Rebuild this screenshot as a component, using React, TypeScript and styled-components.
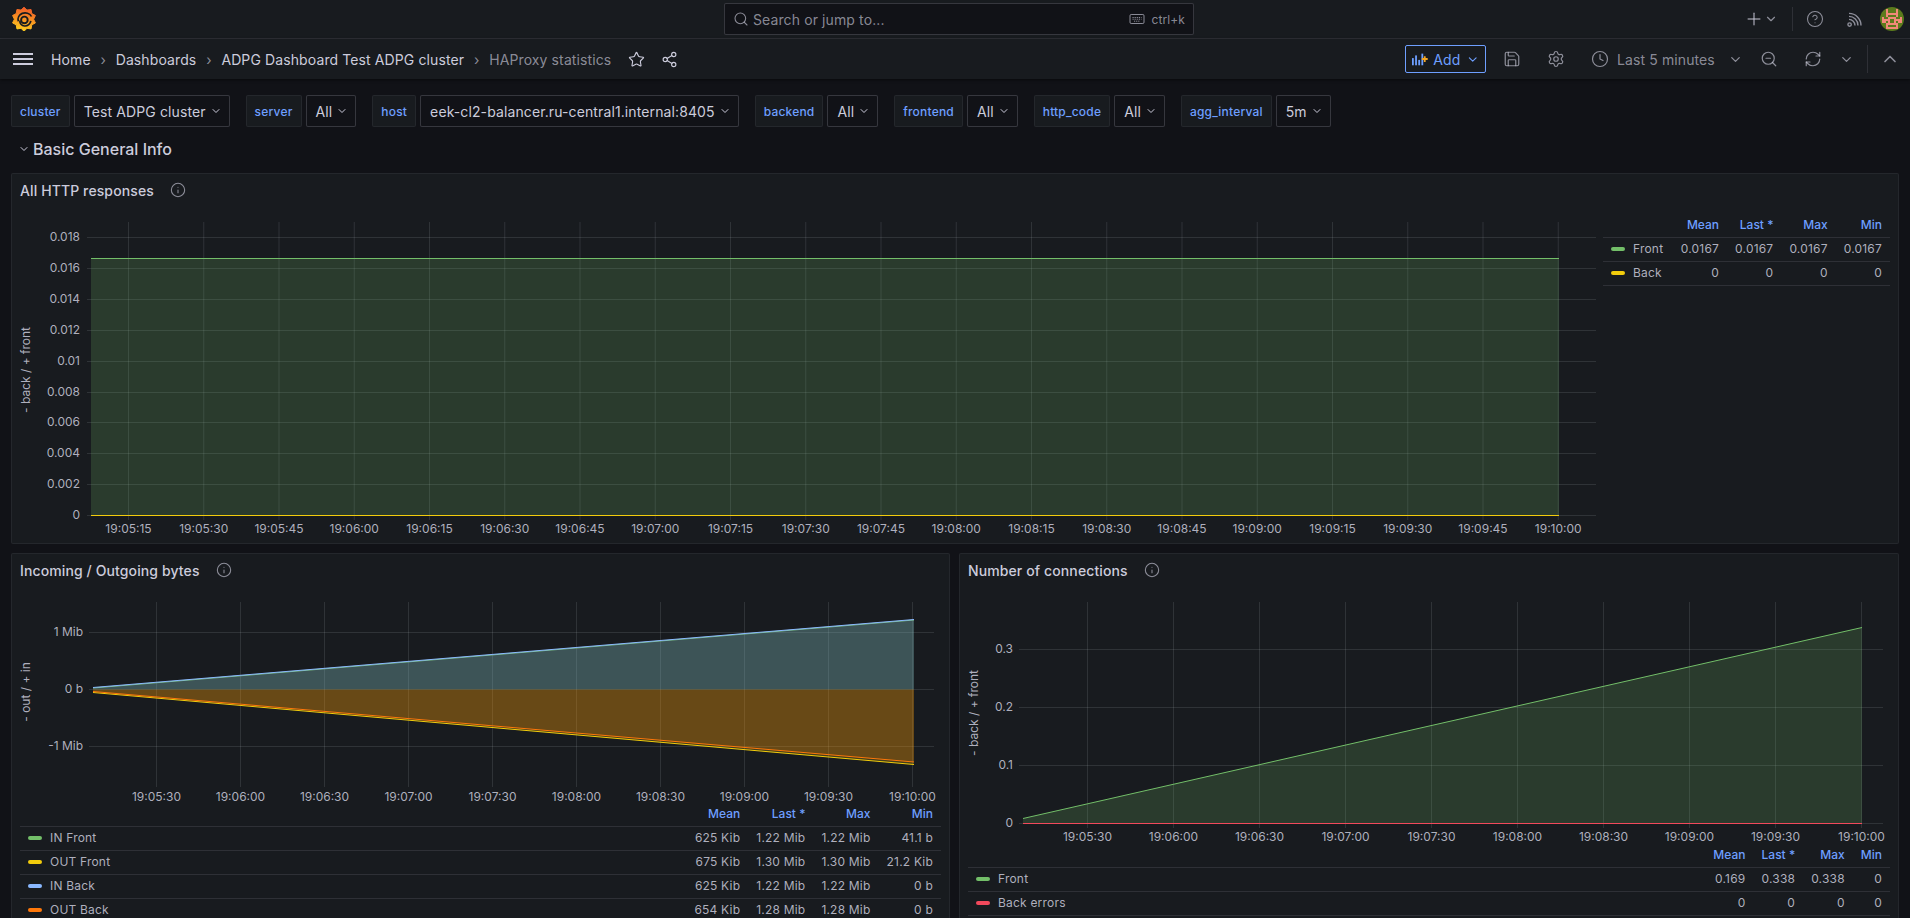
import React from "react";
import styled, { createGlobalStyle } from "styled-components";
import {
  ChevronDown,
  ChevronUp,
  Clock,
  Info,
  Plus,
  RefreshCw,
  Save,
  Search,
  Settings,
  Share2,
  Star,
  ZoomOut,
  CircleHelp,
} from "lucide-react";

type Series = { color: string; from: number; to: number; fill?: boolean };

type ChartProps = {
  left: number;
  top: number;
  width: number;
  height: number;
  gridLeft: number;
  gridRight: number;
  gridTop: number;
  gridBottom: number;
  plotLeft: number;
  plotRight: number;
  baseline: number;
  labelRight: number;
  axisTitle: string;
  axisX: number;
  axisY: number;
  xLabelY: number;
  yTicks: [number, string][];
  xTicks: [number, string][];
  series: Series[];
};

type LegendRow = { color: string; name: string; values: string[] };

const GREEN = "#73BF69";
const YELLOW = "#F2CC0C";
const BLUE = "#8AB8FF";
const ORANGE = "#FF780A";
const RED = "#F2495C";

const timeLabels = (start: number, step: number, first: number, gap: number, count: number) =>
  Array.from({ length: count }, (_, i): [number, string] => {
    const total = 19 * 3600 + 5 * 60 + first + gap * i;
    const mm = String(Math.floor(total / 60) % 60).padStart(2, "0");
    const ss = String(total % 60).padStart(2, "0");
    return [start + step * i, `19:${mm}:${ss}`];
  });

const httpChart: ChartProps = {
  left: 12,
  top: 207,
  width: 1590,
  height: 336,
  gridLeft: 87,
  gridRight: 1596,
  gridTop: 222,
  gridBottom: 520,
  plotLeft: 91,
  plotRight: 1559,
  baseline: 515.5,
  labelRight: 80,
  axisTitle: "- back / + front",
  axisX: 26,
  axisY: 370,
  xLabelY: 529,
  yTicks: [
    [237.5, "0.018"],
    [268.5, "0.016"],
    [299.5, "0.014"],
    [330.5, "0.012"],
    [361.5, "0.01"],
    [392.5, "0.008"],
    [422.5, "0.006"],
    [453.5, "0.004"],
    [484.5, "0.002"],
    [515.5, "0"],
  ],
  xTicks: timeLabels(128.5, 75.25, 15, 15, 20),
  series: [
    { color: GREEN, from: 258.5, to: 258.5, fill: true },
    { color: YELLOW, from: 515.5, to: 515.5 },
  ],
};

const bytesChart: ChartProps = {
  left: 12,
  top: 587,
  width: 937,
  height: 215,
  gridLeft: 89,
  gridRight: 934,
  gridTop: 602,
  gridBottom: 787,
  plotLeft: 93,
  plotRight: 914,
  baseline: 689.5,
  labelRight: 83,
  axisTitle: "- out / + in",
  axisX: 26,
  axisY: 692,
  xLabelY: 796.5,
  yTicks: [
    [632.5, "1 Mib"],
    [689.5, "0 b"],
    [746.5, "-1 Mib"],
  ],
  xTicks: timeLabels(156.5, 84, 30, 30, 10),
  series: [
    { color: GREEN, from: 688, to: 620, fill: true },
    { color: BLUE, from: 687.5, to: 619.5, fill: true },
    { color: YELLOW, from: 692.5, to: 764.5, fill: true },
    { color: ORANGE, from: 691.5, to: 762, fill: true },
  ],
};

const connectionsChart: ChartProps = {
  left: 960,
  top: 587,
  width: 938,
  height: 256,
  gridLeft: 1019,
  gridRight: 1883,
  gridTop: 602,
  gridBottom: 828,
  plotLeft: 1023,
  plotRight: 1862,
  baseline: 823.5,
  labelRight: 1013,
  axisTitle: "- back / + front",
  axisX: 974,
  axisY: 713,
  xLabelY: 837,
  yTicks: [
    [649.5, "0.3"],
    [707.5, "0.2"],
    [765.5, "0.1"],
    [823.5, "0"],
  ],
  xTicks: timeLabels(1087.5, 86, 30, 30, 10),
  series: [
    { color: GREEN, from: 818.5, to: 627.5, fill: true },
    { color: RED, from: 823.5, to: 823.5 },
  ],
};

const httpLegend: LegendRow[] = [
  { color: GREEN, name: "Front", values: ["0.0167", "0.0167", "0.0167", "0.0167"] },
  { color: YELLOW, name: "Back", values: ["0", "0", "0", "0"] },
];

const bytesLegend: LegendRow[] = [
  { color: GREEN, name: "IN Front", values: ["625 Kib", "1.22 Mib", "1.22 Mib", "41.1 b"] },
  { color: YELLOW, name: "OUT Front", values: ["675 Kib", "1.30 Mib", "1.30 Mib", "21.2 Kib"] },
  { color: BLUE, name: "IN Back", values: ["625 Kib", "1.22 Mib", "1.22 Mib", "0 b"] },
  { color: ORANGE, name: "OUT Back", values: ["654 Kib", "1.28 Mib", "1.28 Mib", "0 b"] },
];

const connectionsLegend: LegendRow[] = [
  { color: GREEN, name: "Front", values: ["0.169", "0.338", "0.338", "0"] },
  { color: RED, name: "Back errors", values: ["0", "0", "0", "0"] },
];

const variables = [
  { label: "cluster", value: "Test ADPG cluster" },
  { label: "server", value: "All" },
  { label: "host", value: "eek-cl2-balancer.ru-central1.internal:8405" },
  { label: "backend", value: "All" },
  { label: "frontend", value: "All" },
  { label: "http_code", value: "All" },
  { label: "agg_interval", value: "5m" },
];

const avatarPixels = [
  "............",
  "...#....#...",
  "...#....#...",
  "...######...",
  "...#....#...",
  ".#..####..#.",
  ".####..####.",
  ".##.#..#.##.",
  "...######...",
  "...#....#...",
  "...######...",
  "............",
];

const logoPoints = Array.from({ length: 20 }, (_, i) => {
  const angle = (Math.PI * 2 * i) / 20 - Math.PI / 2;
  const radius = i % 2 === 0 ? 12 : 9.6;
  return `${(12 + radius * Math.cos(angle)).toFixed(2)},${(12.2 + radius * Math.sin(angle)).toFixed(2)}`;
}).join(" ");

const GrafanaLogo = () => (
  <svg width="24" height="24" viewBox="0 0 24 24">
    <defs>
      <linearGradient id="logoFill" x1="0.35" y1="1" x2="0.55" y2="0">
        <stop offset="0" stopColor="#FFD21F" />
        <stop offset="0.5" stopColor="#F89321" />
        <stop offset="1" stopColor="#F05A28" />
      </linearGradient>
    </defs>
    <polygon points={logoPoints} fill="url(#logoFill)" stroke="url(#logoFill)" strokeWidth="1" strokeLinejoin="round" />
    <path
      d="M19.5 9.5C18 6.3 13.6 5 10.2 6.4C7 7.7 5.4 11 6.3 14.3M18.8 13.8C18.5 17 15.6 19.2 12.6 19C9.6 18.8 7.6 16.4 7.9 13.6"
      fill="none"
      stroke="#181B1F"
      strokeWidth="1.7"
    />
    <circle cx="12.4" cy="12.9" r="3.3" fill="none" stroke="#181B1F" strokeWidth="1.9" />
  </svg>
);

const RssIcon = () => (
  <svg width="18" height="18" viewBox="0 0 18 18" fill="none" stroke="currentColor" strokeWidth="1.4">
    <circle cx="3.6" cy="14.6" r="1.7" />
    <path d="M3 9.4a6 6 0 0 1 6 6" />
    <path d="M3 6.4a9 9 0 0 1 9 9" />
    <path d="M3 3.4a12 12 0 0 1 12 12" />
  </svg>
);

const KeyboardIcon = () => (
  <svg width="16" height="12" viewBox="0 0 16 12" fill="none" stroke="currentColor">
    <rect x="1" y="1.5" width="14" height="9" rx="1.2" />
    <path d="M3.5 4.5h9M3.5 6.2h9M5 8.2h6" strokeDasharray="1.2 0.9" />
  </svg>
);

const AddPanelIcon = () => (
  <svg width="18" height="16" viewBox="0 0 18 16">
    <g fill="#6E9FFF">
      <rect x="0" y="7" width="2" height="8" />
      <rect x="3.5" y="4" width="2" height="11" />
      <rect x="7" y="9" width="2" height="6" />
      <rect x="10.5" y="2" width="2" height="13" />
    </g>
    <path d="M11 8h6.5M14.2 4.8v6.5" stroke="#F5A623" strokeWidth="2" />
  </svg>
);

const Avatar = () => (
  <svg width="24" height="24" viewBox="0 0 24 24">
    <defs>
      <clipPath id="avatarClip">
        <circle cx="12" cy="12" r="12" />
      </clipPath>
    </defs>
    <g clipPath="url(#avatarClip)">
      <rect width="24" height="24" fill="#5B7B1C" />
      {avatarPixels.map((row, y) =>
        row.split("").map((cell, x) =>
          cell === "#" ? <rect key={`${x}-${y}`} x={x * 2} y={y * 2} width="2" height="2" fill="#F0897A" /> : null
        )
      )}
    </g>
  </svg>
);

const Chart = (c: ChartProps) => (
  <ChartSvg width={c.width} height={c.height} viewBox={`${c.left} ${c.top} ${c.width} ${c.height}`}>
    {c.yTicks.map(([y, label]) => (
      <g key={label}>
        <GridLine x1={c.gridLeft} x2={c.gridRight} y1={y} y2={y} />
        <AxisText x={c.labelRight} y={y} dy="0.27em" textAnchor="end">
          {label}
        </AxisText>
      </g>
    ))}
    {c.xTicks.map(([x, label]) => (
      <g key={label}>
        <GridLine x1={x} x2={x} y1={c.gridTop} y2={c.gridBottom} />
        <AxisText x={x} y={c.xLabelY} dy="0.35em" textAnchor="middle">
          {label}
        </AxisText>
      </g>
    ))}
    <AxisText
      x={c.axisX}
      y={c.axisY}
      dy="0.35em"
      textAnchor="middle"
      transform={`rotate(-90 ${c.axisX} ${c.axisY})`}
    >
      {c.axisTitle}
    </AxisText>
    {c.series.map((s) => (
      <g key={s.color}>
        {s.fill && (
          <polygon
            points={`${c.plotLeft},${c.baseline} ${c.plotLeft},${s.from} ${c.plotRight},${s.to} ${c.plotRight},${c.baseline}`}
            fill={s.color}
            fillOpacity="0.2"
          />
        )}
        <line x1={c.plotLeft} y1={s.from} x2={c.plotRight} y2={s.to} stroke={s.color} strokeWidth="1" />
      </g>
    ))}
  </ChartSvg>
);

const Legend = ({ rows }: { rows: LegendRow[] }) => (
  <LegendTable>
    <thead>
      <tr>
        <LegendHead $wide />
        <LegendHead>Mean</LegendHead>
        <LegendHead>Last *</LegendHead>
        <LegendHead>Max</LegendHead>
        <LegendHead>Min</LegendHead>
      </tr>
    </thead>
    <tbody>
      {rows.map((row) => (
        <tr key={row.name}>
          <LegendName>
            <LegendLabel>
              <LegendSwatch $color={row.color} />
              {row.name}
            </LegendLabel>
          </LegendName>
          {row.values.map((value, i) => (
            <LegendValue key={i}>{value}</LegendValue>
          ))}
        </tr>
      ))}
    </tbody>
  </LegendTable>
);

const PanelTitle = ({ title }: { title: string }) => (
  <PanelHeader>
    <PanelName>{title}</PanelName>
    <InfoMark>
      <Info size={16} strokeWidth={1.6} />
    </InfoMark>
  </PanelHeader>
);

const App: React.FC = () => {
  return (
    <Page>
      <GlobalStyle />
      <TopNav>
        <NavLeft>
          <GrafanaLogo />
        </NavLeft>
        <SearchBox>
          <Search size={16} strokeWidth={1.6} />
          <SearchText>Search or jump to...</SearchText>
          <Shortcut>
            <KeyboardIcon />
            ctrl+k
          </Shortcut>
        </SearchBox>
        <NavRight>
          <Plus size={20} strokeWidth={1.8} />
          <SmallChevron $left={0}>
            <ChevronDown size={14} />
          </SmallChevron>
          <NavDivider />
          <NavIcon>
            <CircleHelp size={18} strokeWidth={1.4} />
          </NavIcon>
          <NavIcon>
            <RssIcon />
          </NavIcon>
          <AvatarSlot>
            <Avatar />
          </AvatarSlot>
        </NavRight>
      </TopNav>

      <Toolbar>
        <Crumbs>
          <MenuButton>
            <span />
            <span />
            <span />
          </MenuButton>
          <Crumb>Home</Crumb>
          <CrumbArrow>›</CrumbArrow>
          <Crumb>Dashboards</Crumb>
          <CrumbArrow>›</CrumbArrow>
          <Crumb>ADPG Dashboard Test ADPG cluster</Crumb>
          <CrumbArrow>›</CrumbArrow>
          <Crumb $current>HAProxy statistics</Crumb>
          <CrumbIcon $left={17}>
            <Star size={17} strokeWidth={1.6} />
          </CrumbIcon>
          <CrumbIcon $left={16}>
            <Share2 size={17} strokeWidth={1.6} />
          </CrumbIcon>
        </Crumbs>
        <Tools>
          <AddButton>
            <AddPanelIcon />
            Add
            <ChevronDown size={15} />
          </AddButton>
          <ToolButton $left={10}>
            <Save size={18} strokeWidth={1.6} />
          </ToolButton>
          <ToolButton $left={12}>
            <Settings size={18} strokeWidth={1.6} />
          </ToolButton>
          <TimePicker>
            <Clock size={18} strokeWidth={1.6} />
            <TimeLabel>Last 5 minutes</TimeLabel>
            <ChevronDown size={15} />
          </TimePicker>
          <ToolButton $left={2}>
            <ZoomOut size={18} strokeWidth={1.6} />
          </ToolButton>
          <ToolButton $left={12}>
            <RefreshCw size={18} strokeWidth={1.6} />
          </ToolButton>
          <SmallChevron $left={10}>
            <ChevronDown size={15} />
          </SmallChevron>
          <ToolDivider />
          <ToolButton $left={6}>
            <ChevronUp size={20} />
          </ToolButton>
        </Tools>
      </Toolbar>

      <Content>
        <Variables>
          {variables.map((v) => (
            <VariableGroup key={v.label}>
              <VariableLabel>{v.label}</VariableLabel>
              <VariableValue>
                {v.value}
                <ChevronDown size={12} strokeWidth={2} />
              </VariableValue>
            </VariableGroup>
          ))}
        </Variables>

        <RowHeader>
          <ChevronDown size={12} strokeWidth={2} />
          Basic General Info
        </RowHeader>

        <PanelGrid>
          <WidePanel>
            <PanelTitle title="All HTTP responses" />
            <WideBody>
              <Chart {...httpChart} />
              <SideLegend>
                <Legend rows={httpLegend} />
              </SideLegend>
            </WideBody>
          </WidePanel>
          <Panel>
            <PanelTitle title="Incoming / Outgoing bytes" />
            <Chart {...bytesChart} />
            <BottomLegend>
              <Legend rows={bytesLegend} />
            </BottomLegend>
          </Panel>
          <Panel>
            <PanelTitle title="Number of connections" />
            <Chart {...connectionsChart} />
            <BottomLegend>
              <Legend rows={connectionsLegend} />
            </BottomLegend>
          </Panel>
        </PanelGrid>
      </Content>
    </Page>
  );
};

export default App;

const GlobalStyle = createGlobalStyle`
  html, body {
    margin: 0;
    height: 100%;
    background: #111217;
    overflow: hidden;
  }
  body {
    font-family: Inter, "Noto Sans", sans-serif;
    font-size: 14px;
    letter-spacing: 0.11px;
    color: #ccccdc;
  }
`;

const Page = styled.div`
  height: 918px;
  overflow: hidden;
  background: #111217;
`;

const TopNav = styled.header`
  display: grid;
  grid-template-columns: 724px 470px 1fr;
  align-items: center;
  height: 38px;
  background: #181b1f;
  border-bottom: 1px solid rgba(204, 204, 220, 0.12);
`;

const NavLeft = styled.div`
  display: flex;
  padding-left: 12px;
`;

const SearchBox = styled.div`
  display: flex;
  align-items: center;
  box-sizing: border-box;
  height: 32px;
  padding: 0 8px;
  gap: 4px;
  background: #111217;
  border: 1px solid rgba(204, 204, 220, 0.2);
  border-radius: 2px;
  color: rgba(204, 204, 220, 0.65);
`;

const SearchText = styled.span`
  flex: 1;
`;

const Shortcut = styled.span`
  display: flex;
  align-items: center;
  gap: 6px;
  font-size: 12px;
`;

const NavRight = styled.div`
  display: flex;
  align-items: center;
  justify-content: flex-end;
  padding-right: 6px;
  color: rgba(204, 204, 220, 0.65);
`;

const SmallChevron = styled.span<{ $left: number }>`
  display: flex;
  margin-left: ${(p) => p.$left}px;
  color: rgba(204, 204, 220, 0.65);
`;

const NavDivider = styled.span`
  width: 1px;
  height: 24px;
  margin: 0 13px 0 14px;
  background: rgba(204, 204, 220, 0.12);
`;

const NavIcon = styled.span`
  display: flex;
  justify-content: center;
  width: 18px;
  margin-right: 22px;
`;

const AvatarSlot = styled.span`
  display: flex;
  margin-left: -6px;
`;

const Toolbar = styled.div`
  display: flex;
  align-items: center;
  justify-content: space-between;
  height: 40px;
  padding: 0 4px 0 13px;
  background: #181b1f;
  box-shadow: 0 1px 3px rgba(0, 0, 0, 0.5);
  position: relative;
`;

const Crumbs = styled.nav`
  display: flex;
  align-items: center;
`;

const MenuButton = styled.span`
  display: flex;
  flex-direction: column;
  gap: 3px;
  width: 20px;
  margin-right: 18px;
  span {
    height: 2px;
    background: #ccccdc;
  }
`;

const Crumb = styled.span<{ $current?: boolean }>`
  color: ${(p) => (p.$current ? "rgba(204, 204, 220, 0.65)" : "#ccccdc")};
`;

const CrumbArrow = styled.span`
  width: 25px;
  text-align: center;
  color: rgba(204, 204, 220, 0.65);
`;

const CrumbIcon = styled.span<{ $left: number }>`
  display: flex;
  margin-left: ${(p) => p.$left}px;
  color: #ccccdc;
`;

const Tools = styled.div`
  display: flex;
  align-items: center;
  color: rgba(204, 204, 220, 0.65);
`;

const AddButton = styled.button`
  display: flex;
  align-items: center;
  gap: 5px;
  box-sizing: border-box;
  width: 81px;
  height: 28px;
  padding: 0 6px;
  background: transparent;
  border: 1px solid #6e9fff;
  border-radius: 2px;
  color: #6e9fff;
  font: 400 14px Inter, sans-serif;
  letter-spacing: 0.2px;
`;

const ToolButton = styled.span<{ $left: number }>`
  display: flex;
  align-items: center;
  justify-content: center;
  width: 32px;
  margin-left: ${(p) => p.$left}px;
`;

const TimePicker = styled.span`
  display: flex;
  align-items: center;
  box-sizing: border-box;
  width: 168px;
  margin-left: 11px;
  padding: 0 8px;
`;

const TimeLabel = styled.span`
  flex: 1;
  margin-left: 8px;
`;

const ToolDivider = styled.span`
  width: 1px;
  height: 28px;
  margin-left: 13px;
  background: rgba(204, 204, 220, 0.12);
`;

const Content = styled.main`
  padding: 16px 11px 0;
`;

const Variables = styled.div`
  display: flex;
  gap: 16px;
`;

const VariableGroup = styled.div`
  display: flex;
  gap: 4px;
`;

const VariableLabel = styled.label`
  display: flex;
  align-items: center;
  box-sizing: border-box;
  height: 32px;
  padding: 0 8px;
  background: #181b1f;
  border: 1px solid rgba(204, 204, 220, 0.07);
  border-radius: 2px;
  color: #6e9fff;
  font-size: 12px;
  font-weight: 500;
  letter-spacing: 0.2px;
`;

const VariableValue = styled.div`
  display: flex;
  align-items: center;
  gap: 4px;
  box-sizing: border-box;
  height: 32px;
  padding: 0 7px 0 9px;
  background: #111217;
  border: 1px solid rgba(204, 204, 220, 0.2);
  border-radius: 2px;
  white-space: nowrap;
`;

const RowHeader = styled.h2`
  display: flex;
  align-items: center;
  gap: 3px;
  height: 46px;
  margin: 0;
  padding: 0 0 2px 7px;
  box-sizing: border-box;
  font-size: 16px;
  font-weight: 500;
  letter-spacing: 0;
`;

const PanelGrid = styled.div`
  display: grid;
  grid-template-columns: 939px 940px;
  grid-template-rows: 371px 400px;
  gap: 9px;
`;

const Panel = styled.section`
  box-sizing: border-box;
  background: #181b1f;
  border: 1px solid rgba(204, 204, 220, 0.07);
  border-radius: 2px;
`;

const WidePanel = styled(Panel)`
  grid-column: 1 / -1;
`;

const WideBody = styled.div`
  display: flex;
`;

const PanelHeader = styled.div`
  display: flex;
  align-items: center;
  gap: 16px;
  height: 32px;
  margin-bottom: 1px;
  padding: 0 8px;
`;

const PanelName = styled.h6`
  margin: 0;
  font-size: 14px;
  font-weight: 500;
`;

const InfoMark = styled.span`
  display: flex;
  color: rgba(204, 204, 220, 0.65);
`;

const ChartSvg = styled.svg`
  display: block;
  flex: none;
  overflow: visible;
`;

const GridLine = styled.line`
  stroke: rgba(240, 250, 255, 0.11);
  stroke-width: 1;
`;

const AxisText = styled.text`
  fill: rgba(204, 204, 220, 0.85);
  font-size: 12px;
  letter-spacing: 0;
`;

const SideLegend = styled.div`
  flex: 1;
  padding: 6px 8px 0 1px;
`;

const BottomLegend = styled.div`
  padding: 0 8px;
`;

const LegendTable = styled.table`
  width: 100%;
  border-collapse: collapse;
  font-size: 12px;
  letter-spacing: 0.2px;
`;

const LegendHead = styled.th<{ $wide?: boolean }>`
  width: ${(p) => (p.$wide ? "100%" : "auto")};
  height: 24px;
  padding: 0 8px;
  box-sizing: border-box;
  color: #6e9fff;
  font-weight: 500;
  text-align: right;
  white-space: nowrap;
  letter-spacing: 0;
`;

const LegendName = styled.td`
  height: 24px;
  padding: 0 8px 1px;
  box-sizing: border-box;
  border-top: 1px solid rgba(204, 204, 220, 0.12);
  border-bottom: 1px solid rgba(204, 204, 220, 0.12);
`;

const LegendLabel = styled.span`
  display: flex;
  align-items: center;
  gap: 8px;
  white-space: nowrap;
  color: rgba(204, 204, 220, 0.85);
`;

const LegendSwatch = styled.i<{ $color: string }>`
  width: 14px;
  height: 4px;
  border-radius: 5px;
  background: ${(p) => p.$color};
`;

const LegendValue = styled(LegendName)`
  text-align: right;
  white-space: nowrap;
  color: rgba(204, 204, 220, 0.85);
`;
